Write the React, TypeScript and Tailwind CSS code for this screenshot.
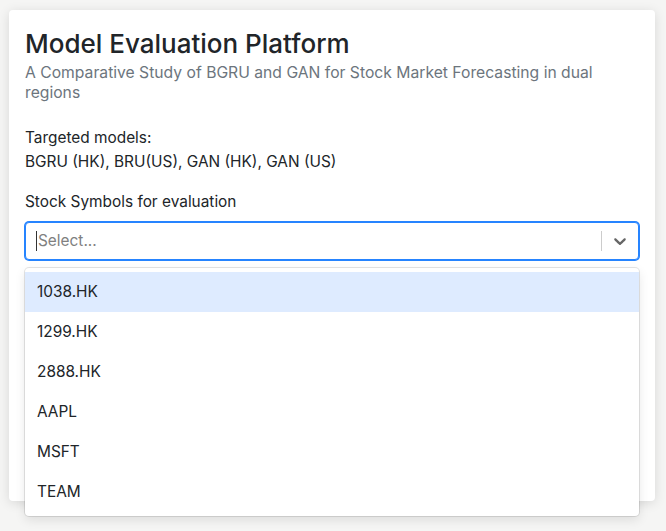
import React from "react";

const options = ["1038.HK", "1299.HK", "2888.HK", "AAPL", "MSFT", "TEAM"];

export default function App() {
  return (
    <div
      className="w-[666px] h-[531px] bg-[#f5f5f4] overflow-hidden pt-[10px] pl-[9px]"
      style={{ fontFamily: "Inter, 'Liberation Sans', sans-serif" }}
    >
      <div className="relative w-[646px] h-[491px] bg-white rounded-[4px] shadow-[0_2px_12px_rgba(0,0,0,0.12)] px-4 pt-4 text-[#212529]">
        <h1 className="text-[26px] leading-[34px] font-medium pt-[1px]">
          Model Evaluation Platform
        </h1>
        <p className="text-[15.7px] leading-[20px] text-[#6c757d] mt-[2px]">
          A Comparative Study of BGRU and GAN for Stock Market Forecasting in dual regions
        </p>
        <div className="mt-[23px] text-[15.4px] leading-[24px]">
          <div>Targeted models:</div>
          <div>BGRU (HK), BRU(US), GAN (HK), GAN (US)</div>
        </div>
        <div className="mt-[16px] text-[15.4px] leading-[24px]">Stock Symbols for evaluation</div>
        <div className="relative mt-[8px]">
          <div className="h-[38px] flex items-center rounded-[4px] border border-[#2684ff] shadow-[0_0_0_1px_#2684ff] bg-white">
            <div className="flex-1 flex items-center pl-[10px] text-[15.4px] text-[#808080]">
              <span className="inline-block w-[1px] h-[20px] bg-[#333] mr-[1px]" />
              Select...
            </div>
            <span className="w-[1px] h-[20px] bg-[#cccccc] self-center" />
            <div className="w-[36px] flex items-center justify-center text-[#666]">
              <svg width="20" height="20" viewBox="0 0 20 20" fill="currentColor">
                <path d="M4.516 7.548c0.436-0.446 1.043-0.481 1.576 0l3.908 3.747 3.908-3.747c0.533-0.481 1.141-0.446 1.574 0 0.436 0.445 0.408 1.197 0 1.615-0.406 0.418-4.695 4.502-4.695 4.502-0.217 0.223-0.502 0.335-0.787 0.335s-0.57-0.112-0.789-0.335c0 0-4.287-4.084-4.695-4.502s-0.436-1.17 0-1.615z" />
              </svg>
            </div>
          </div>
          <div className="absolute left-0 right-0 top-[46px] bg-white rounded-[4px] py-[4px] shadow-[0_0_0_1px_rgba(0,0,0,0.1),0_4px_11px_rgba(0,0,0,0.1)] z-10">
            {options.map((o, i) => (
              <div
                key={o}
                className={
                  "h-[40px] px-[12px] flex items-center text-[15.4px] text-[#212529] " +
                  (i === 0 ? "bg-[#deebff]" : "")
                }
              >
                {o}
              </div>
            ))}
          </div>
        </div>
      </div>
    </div>
  );
}
